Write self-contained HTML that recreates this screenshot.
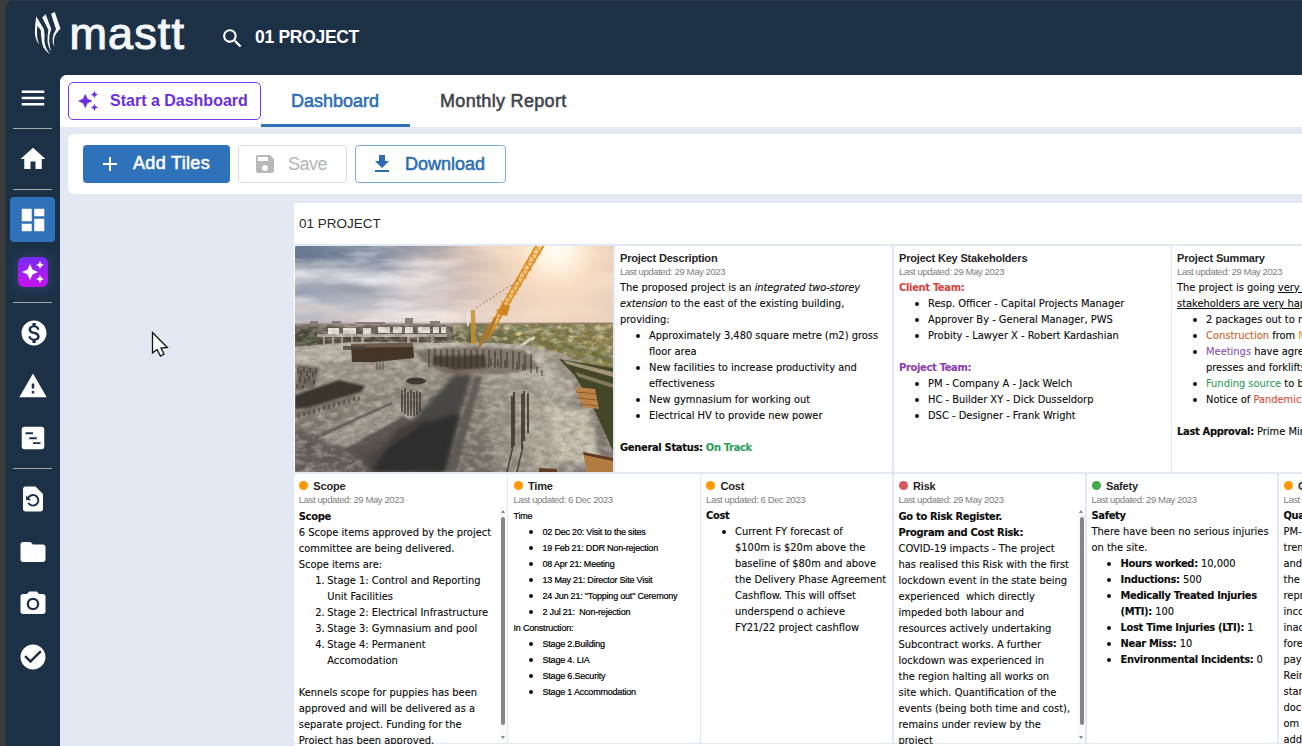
<!DOCTYPE html>
<html lang="en">
<head>
<meta charset="utf-8">
<title>01 PROJECT - Dashboard</title>
<style>
*{box-sizing:border-box;margin:0;padding:0}
html,body{width:1302px;height:746px;overflow:hidden;background:#3b3b3b;font-family:"Liberation Sans",sans-serif}
#app{position:absolute;left:5px;top:0;width:1297px;height:746px;background:#1d3146;border-top-left-radius:9px;overflow:hidden}
#topline{position:absolute;left:0;top:0;width:1297px;height:1px;background:#2a3947}
/* header */
#logo{position:absolute;left:27px;top:10px}
#brand{position:absolute;left:64.500px;top:4px;font-size:45px;color:#f4f7fb;line-height:60px;-webkit-text-stroke:1.100px #f4f7fb;letter-spacing:1.100px}
#search{position:absolute;left:215px;top:25.500px;width:25px;height:25px}
#projname{position:absolute;left:250px;top:26px;font-size:17.500px;font-weight:bold;color:#fff;line-height:22px;letter-spacing:-0.300px}
/* sidebar */
.sep{position:absolute;left:8px;width:39px;height:1px;background:#a3a7aa}
.ico{position:absolute;left:13px;width:30px;height:30px}
#activebox{position:absolute;left:5px;top:197px;width:45px;height:45px;border-radius:4px;background:#2f72b9}
#aibox{position:absolute;left:13px;top:257px;width:30px;height:30px;border-radius:6px;background:linear-gradient(180deg,#7a2af6 5%,#c414ee 95%);box-shadow:0 1px 9px 3px rgba(95,105,200,.22)}
/* content */
#content{position:absolute;left:55px;top:75px;width:1242px;height:671px;background:#e2e9f3;border-top-left-radius:7px;overflow:hidden}
#tabbar{position:absolute;left:0;top:0;width:1242px;height:52px;background:#fff}
#startbtn{position:absolute;left:8px;top:7px;width:193px;height:38px;border:1px solid #7c3aed;border-radius:5px;color:#6d28d9}
#startbtn span{position:absolute;left:41px;top:8px;font-size:16px;font-weight:bold;line-height:20px;white-space:nowrap;color:#6a2ee0}
.tab{position:absolute;top:14px;font-size:18px;line-height:24px;white-space:nowrap;-webkit-text-stroke:0.55px currentColor}
#tab1{left:231px;color:#2d6db3}
#tab2{left:380px;color:#3f4349;letter-spacing:0.32px}
#tabline{position:absolute;left:201px;top:49px;width:149px;height:3px;background:#2f72b9}
#toolbar{position:absolute;left:8px;top:59px;width:1240px;height:60px;background:#fff;border-radius:6px}
.btn{position:absolute;top:11px;height:38px;border-radius:4px;font-size:18px;line-height:22px;white-space:nowrap;-webkit-text-stroke:0.55px currentColor}
.btn span{position:absolute;top:7px}
#addbtn{left:15px;width:147px;background:#2f72b9;color:#fff;letter-spacing:0.33px}
#savebtn{left:170px;width:109px;border:1px solid #dcdcdc;color:#b5b5b5;-webkit-text-stroke:0;letter-spacing:-0.5px}
#dlbtn{left:287px;width:151px;border:1px solid #7fa9d6;color:#2d6db3}
/* dashboard */
#dtitle{position:absolute;left:234px;top:128px;width:1010px;height:41px;background:#fff;font-size:13.5px;line-height:41px;padding-left:5px;color:#2a2a2a;border-radius:2px}
.tile{position:absolute;overflow:hidden}
.bg{position:absolute;background:#fff;border-radius:2px}
.th{position:absolute;top:5px;font-size:11px;line-height:14px;font-weight:bold;color:#262626;white-space:nowrap;letter-spacing:-0.18px}
.tu{position:absolute;left:5px;top:20px;font-size:9.5px;line-height:12px;color:#7e7e7e;white-space:nowrap;letter-spacing:-0.4px}
.tb{position:absolute;left:5px;top:34px;font-family:"DejaVu Sans Condensed","Liberation Sans",sans-serif;font-size:11px;line-height:16px;color:#0c0c0c;white-space:nowrap;letter-spacing:0;-webkit-text-stroke:0.12px currentColor}
.tb.hb{top:35px}
.tb.up{top:34px}
.r2 .tb,.r2 .tu{left:4.5px}
.tb b{letter-spacing:-0.3px}
.tb em{letter-spacing:-0.1px}
.tb.ar{font-family:"Liberation Sans",sans-serif;font-size:9px;letter-spacing:-0.2px;color:#000;-webkit-text-stroke:0.2px #000}
.li{position:relative;padding-left:29px}
.li:before{content:"";position:absolute;left:15.5px;top:6px;width:4px;height:4px;border-radius:50%;background:#111}
.oli{position:relative;padding-left:28.5px}
.oli .n{position:absolute;left:16.5px}
.dot{position:absolute;left:4.5px;top:7px;width:9px;height:9px;border-radius:50%}
.sbk{position:absolute;top:33px;width:7px;height:235px;background:#fafafa}
.sbt{position:absolute;top:43px;width:4px;height:208px;background:#868686;border-radius:2px}
.sbu{position:absolute;top:36px;width:0;height:0;border-left:2.5px solid transparent;border-right:2.5px solid transparent;border-bottom:3.500px solid #858585}
.sbd{position:absolute;top:262px;width:0;height:0;border-left:2.5px solid transparent;border-right:2.5px solid transparent;border-top:3.500px solid #858585}
</style>
</head>
<body>
<div id="app">
<div id="topline"></div><div style="position:absolute;left:0;top:7px;width:1px;height:740px;background:rgba(59,59,59,.5)"></div>
<svg id="logo" width="40" height="50" viewBox="30 10 40 50" style="position:absolute;left:25px;top:10px">
 <g fill="#f7f9fc">
  <path d="M36.3 16.6 L43.9 29 Q45 35 44.4 41 Q45.5 49 50 54.2 Q43.5 50 42.2 43.5 Q40.8 36 40.8 30.2 L37.4 25.8 Q36.6 32 37.3 37.5 Q37.8 41.5 39.3 44.8 Q35.2 40 34.9 33 Q34.8 24 36.3 16.6Z"/>
  <path d="M45.6 14.2 L51.3 29 Q48.6 35 49.2 41 Q49.6 47 51.2 51.4 Q47.6 46.5 47.5 40.5 Q47.4 35 48.4 30 L42.2 17.4Z"/>
  <path d="M54.8 12.1 L60.5 28.8 Q54.6 34 54 39.5 Q53.6 43.5 54.4 47 Q52.2 43.5 52.6 39 Q53 33.5 56 29.2 L51 13.8Z"/>
 </g>
</svg>
<div id="brand">mastt</div>
<svg id="search" width="24" height="24" viewBox="0 0 24 24"><path fill="#fff" d="M15.5 14h-.79l-.28-.27C15.41 12.59 16 11.11 16 9.5 16 5.91 13.09 3 9.5 3S3 5.91 3 9.5 5.91 16 9.5 16c1.61 0 3.09-.59 4.23-1.57l.27.28v.79l5 4.99L20.49 19l-4.99-5zm-6 0C7.01 14 5 11.99 5 9.5S7.01 5 9.5 5 14 7.01 14 9.5 11.99 14 9.5 14z"/></svg>
<div id="projname">01 PROJECT</div>
<!-- sidebar -->
<svg class="ico" style="top:83px" viewBox="0 0 24 24"><path fill="#fff" d="M3 18h18v-2H3v2zm0-5h18v-2H3v2zm0-7v2h18V6H3z"/></svg>
<div class="sep" style="top:128px"></div>
<svg class="ico" style="top:144px" viewBox="0 0 24 24"><path fill="#fff" d="M10 20v-6h4v6h5v-8h3L12 3 2 12h3v8z"/></svg>
<div class="sep" style="top:189px"></div>
<div id="activebox"></div>
<svg class="ico" style="top:205px" viewBox="0 0 24 24"><path fill="#fff" d="M3 13h8V3H3v10zm0 8h8v-6H3v6zm10 0h8V11h-8v10zm0-18v6h8V3h-8z"/></svg>
<div id="aibox"></div>
<svg class="ico" style="top:260px;left:16px;width:24px;height:24px" viewBox="0 0 24 24"><path fill="#fff" d="M19 9l1.25-2.75L23 5l-2.75-1.25L19 1l-1.25 2.75L15 5l2.750 1.250L19 9zm-7.5.5L9 4 6.500 9.500 1 12l5.500 2.500L9 20l2.500-5.500L17 12l-5.500-2.500zM19 15l-1.250 2.750L15 19l2.750 1.250L19 23l1.250-2.750L23 19l-2.750-1.250L19 15z"/></svg>
<div class="sep" style="top:302px"></div>
<svg class="ico" style="top:318px;left:14px" viewBox="0 0 24 24"><path fill="#fff" d="M12 2C6.480 2 2 6.480 2 12s4.480 10 10 10 10-4.480 10-10S17.520 2 12 2zm1.410 16.090V20h-2.670v-1.930c-1.710-.360-3.160-1.460-3.270-3.400h1.960c.1 1.050.820 1.870 2.650 1.870 1.960 0 2.400-.980 2.400-1.590 0-.830-.440-1.610-2.670-2.140-2.480-.6-4.180-1.620-4.180-3.670 0-1.720 1.390-2.840 3.110-3.210V4h2.670v1.950c1.860.450 2.790 1.860 2.850 3.390H14.300c-.050-1.110-.640-1.870-2.220-1.870-1.500 0-2.400.680-2.400 1.640 0 .840.650 1.390 2.670 1.910s4.180 1.390 4.180 3.910c-.010 1.830-1.380 2.830-3.120 3.160z"/></svg>
<svg class="ico" style="top:371px" viewBox="0 0 24 24"><path fill="#fff" d="M1 21h22L12 2 1 21zm12-3h-2v-2h2v2zm0-4h-2v-4h2v4z"/></svg>
<svg class="ico" style="top:423px" viewBox="0 0 24 24"><path fill="#fff" fill-rule="evenodd" d="M19 3H5c-1.100 0-2 .9-2 2v14c0 1.100.9 2 2 2h14c1.100 0 2-.9 2-2V5c0-1.100-.9-2-2-2zM6 7.400h6v1.500H6zM9 11.400h6v1.500H9zM12 15.300h6v1.500h-6z"/></svg>
<div class="sep" style="top:468px"></div>
<svg class="ico" style="top:484px" viewBox="0 0 24 24"><path fill="#fff" d="M14 2H6c-1.100 0-1.990.9-1.990 2L4 20c0 1.100.890 2 1.990 2H18c1.100 0 2-.9 2-2V8l-6-6zm-2 16c-2.050 0-3.810-1.240-4.580-3h1.710c.630.9 1.680 1.500 2.870 1.500 1.930 0 3.500-1.570 3.500-3.500S13.930 9.500 12 9.500c-1.350 0-2.520.780-3.100 1.900l1.600 1.600h-4V9l1.300 1.300C8.690 8.920 10.230 8 12 8c2.760 0 5 2.240 5 5s-2.240 5-5 5z"/></svg>
<svg class="ico" style="top:537px" viewBox="0 0 24 24"><path fill="#fff" d="M10 4H4c-1.100 0-1.990.9-1.990 2L2 18c0 1.100.9 2 2 2h16c1.100 0 2-.9 2-2V8c0-1.100-.9-2-2-2h-8l-2-2z"/></svg>
<svg class="ico" style="top:589px" viewBox="0 0 24 24"><circle cx="12" cy="12" r="3.2" fill="#fff"/><path fill="#fff" d="M9 2L7.170 4H4c-1.100 0-2 .9-2 2v12c0 1.100.9 2 2 2h16c1.100 0 2-.9 2-2V6c0-1.100-.9-2-2-2h-3.170L15 2H9zm3 15c-2.760 0-5-2.240-5-5s2.240-5 5-5 5 2.240 5 5-2.240 5-5 5z"/></svg>
<svg class="ico" style="top:642px" viewBox="0 0 24 24"><path fill="#fff" d="M12 2C6.480 2 2 6.480 2 12s4.480 10 10 10 10-4.480 10-10S17.520 2 12 2zm-2 15l-5-5 1.410-1.410L10 14.170l7.590-7.590L19 8l-9 9z"/></svg>

<div id="content">
 <div id="tabbar">
  <div id="startbtn"><svg style="position:absolute;left:8px;top:7px" width="22" height="22" viewBox="0 0 24 24"><path fill="#6a2ee0" d="M19 9l1.250-2.750L23 5l-2.750-1.250L19 1l-1.250 2.750L15 5l2.750 1.250L19 9zm-7.500.5L9 4 6.500 9.500 1 12l5.500 2.500L9 20l2.500-5.500L17 12l-5.500-2.500zM19 15l-1.250 2.750L15 19l2.750 1.250L19 23l1.250-2.750L23 19l-2.750-1.250L19 15z"/></svg><span>Start a Dashboard</span></div>
  <div class="tab" id="tab1">Dashboard</div>
  <div class="tab" id="tab2">Monthly Report</div>
  <div id="tabline"></div>
 </div>
 <div id="toolbar">
  <div class="btn" id="addbtn"><svg style="position:absolute;left:15px;top:7px" width="24" height="24" viewBox="0 0 24 24"><path fill="#fff" d="M19 13h-6v6h-2v-6H5v-2h6V5h2v6h6v2z"/></svg><span style="left:50px">Add Tiles</span></div>
  <div class="btn" id="savebtn"><svg style="position:absolute;left:14px;top:6px" width="24" height="24" viewBox="0 0 24 24"><path fill="#b8b8b8" d="M17 3H5c-1.110 0-2 .9-2 2v14c0 1.100.890 2 2 2h14c1.100 0 2-.9 2-2V7l-4-4zm-5 16c-1.660 0-3-1.340-3-3s1.340-3 3-3 3 1.340 3 3-1.340 3-3 3zm3-10H5V5h10v4z"/></svg><span style="left:49px">Save</span></div>
  <div class="btn" id="dlbtn"><svg style="position:absolute;left:14px;top:6px" width="24" height="24" viewBox="0 0 24 24"><path fill="#2d6db3" d="M19 9h-4V3H9v6H5l7 7 7-7zM5 18v2h14v-2H5z"/></svg><span style="left:49px">Download</span></div>
 </div>
 <div id="dtitle">01 PROJECT</div>
<div class="bg" style="left:234.40px;top:170.80px;width:319.10px;height:226.00px"></div><div class="bg" style="left:555.20px;top:170.80px;width:277.10px;height:226.00px"></div><div class="bg" style="left:833.90px;top:170.80px;width:276.70px;height:226.00px"></div><div class="bg" style="left:1112.20px;top:170.80px;width:137.80px;height:226.00px"></div><div class="bg" style="left:234.40px;top:398.60px;width:212.60px;height:269.40px"></div><div class="bg" style="left:448.40px;top:398.60px;width:191.40px;height:269.40px"></div><div class="bg" style="left:641.40px;top:398.60px;width:190.90px;height:269.40px"></div><div class="bg" style="left:833.90px;top:398.60px;width:191.30px;height:269.40px"></div><div class="bg" style="left:1026.80px;top:398.60px;width:190.40px;height:269.40px"></div><div class="bg" style="left:1218.80px;top:398.60px;width:31.20px;height:269.40px"></div><div class="bg" style="left:234.40px;top:669.20px;width:1020px;height:10px"></div>
<div class="tile" id="imgtile" style="left:235px;top:171px;width:318px;height:226px"><svg width="318" height="226" viewBox="0 0 318 226" style="position:absolute;left:0;top:0;display:block">
<defs>
<linearGradient id="sky" x1="0" y1="0" x2="0" y2="1"><stop offset="0" stop-color="#8c93a4"/><stop offset=".45" stop-color="#c6c3c8"/><stop offset="1" stop-color="#e9dcd2"/></linearGradient>
<linearGradient id="skyl" x1="0" y1="0" x2="1" y2="0.35"><stop offset="0" stop-color="#62758e" stop-opacity=".85"/><stop offset=".5" stop-color="#8e94a8" stop-opacity=".35"/><stop offset="1" stop-color="#b0a0a0" stop-opacity="0"/></linearGradient>
<radialGradient id="sun" cx="262" cy="2" r="175" gradientUnits="userSpaceOnUse"><stop offset="0" stop-color="#fffefa"/><stop offset=".08" stop-color="#fff6e6"/><stop offset=".22" stop-color="#fbdfc2" stop-opacity=".95"/><stop offset=".5" stop-color="#f2d0b6" stop-opacity=".6"/><stop offset="1" stop-color="#e2c2b4" stop-opacity="0"/></radialGradient>
<linearGradient id="trees" x1="0" y1="0" x2="1" y2="0"><stop offset="0" stop-color="#55553a"/><stop offset=".45" stop-color="#76703c"/><stop offset="1" stop-color="#8a7b42"/></linearGradient>
<linearGradient id="ground" x1="0" y1="0" x2="0" y2="1"><stop offset="0" stop-color="#ada496"/><stop offset=".3" stop-color="#8e867a"/><stop offset="1" stop-color="#6d675f"/></linearGradient>
<linearGradient id="gr" x1="0" y1="0" x2="1" y2="0"><stop offset="0" stop-color="#b9b1a4" stop-opacity="0"/><stop offset=".6" stop-color="#c4bbad" stop-opacity=".8"/><stop offset="1" stop-color="#cfc5b6" stop-opacity=".9"/></linearGradient>
<filter id="b1" x="-10%" y="-10%" width="120%" height="120%"><feGaussianBlur stdDeviation="1"/></filter>
<filter id="b2" x="-20%" y="-20%" width="140%" height="140%"><feGaussianBlur stdDeviation="2.5"/></filter>
<filter id="b4" x="-30%" y="-30%" width="160%" height="160%"><feGaussianBlur stdDeviation="5"/></filter>
<clipPath id="clipimg"><rect width="318" height="226" rx="2"/></clipPath>
<filter id="nz" x="0" y="0" width="100%" height="100%"><feTurbulence type="fractalNoise" baseFrequency="0.12 0.2" numOctaves="4" seed="7" result="t"/><feColorMatrix in="t" type="matrix" values="0 0 0 0 0.16  0 0 0 0 0.14  0 0 0 0 0.12  0 0 0 0.9 -0.33"/></filter>
<filter id="nz2" x="0" y="0" width="100%" height="100%"><feTurbulence type="fractalNoise" baseFrequency="0.1 0.18" numOctaves="4" seed="11" result="t"/><feColorMatrix in="t" type="matrix" values="0 0 0 0 0.92  0 0 0 0 0.88  0 0 0 0 0.8  0 0 0 0.8 -0.32"/></filter>
<filter id="cl" x="0" y="0" width="100%" height="100%"><feTurbulence type="fractalNoise" baseFrequency="0.012 0.05" numOctaves="4" seed="5" result="t"/><feColorMatrix in="t" type="matrix" values="0 0 0 0 0.95  0 0 0 0 0.93  0 0 0 0 0.93  0 0 0 2.4 -1.0"/></filter>
<filter id="cd" x="0" y="0" width="100%" height="100%"><feTurbulence type="fractalNoise" baseFrequency="0.015 0.06" numOctaves="3" seed="21" result="t"/><feColorMatrix in="t" type="matrix" values="0 0 0 0 0.36  0 0 0 0 0.42  0 0 0 0 0.52  0 0 0 2.2 -1.0"/></filter>
<filter id="tz" x="0" y="0" width="100%" height="100%"><feTurbulence type="fractalNoise" baseFrequency="0.09 0.16" numOctaves="3" seed="3" result="t"/><feColorMatrix in="t" type="matrix" values="0 0 0 0 0.17  0 0 0 0 0.2  0 0 0 0 0.08  0 0 0 3.2 -1.45"/></filter>
<filter id="ty" x="0" y="0" width="100%" height="100%"><feTurbulence type="fractalNoise" baseFrequency="0.11 0.2" numOctaves="3" seed="9" result="t"/><feColorMatrix in="t" type="matrix" values="0 0 0 0 0.75  0 0 0 0 0.66  0 0 0 0 0.3  0 0 0 3.0 -1.55"/></filter>
<clipPath id="ctree"><path d="M158 79 L318 78 L318 128 L290 118 L262 106 L236 100 L200 97 L158 98Z"/></clipPath>
</defs>
<g clip-path="url(#clipimg)">
<rect width="318" height="226" fill="#9a958c"/>
<!-- sky -->
<rect width="318" height="82" fill="url(#sky)"/>
<rect width="318" height="82" fill="url(#skyl)"/>
<g filter="url(#b4)" opacity=".75">
 <path d="M-10 22 Q60 18 120 40 T250 62 L250 70 Q150 52 100 44 T-10 36Z" fill="#e4e0e2"/>
 <path d="M-10 8 Q40 4 90 22 L70 24 Q30 14 -10 18Z" fill="#5d6f88"/>
 <path d="M30 34 Q70 34 100 48 L60 44Z" fill="#7f8798"/>
 <path d="M-10 56 Q80 50 170 66 L170 76 L-10 74Z" fill="#ddd5d2"/>
</g>
<rect width="230" height="80" filter="url(#cd)" opacity=".7"/>
<rect width="318" height="80" filter="url(#cl)" opacity=".8"/>
<rect width="318" height="120" fill="url(#sun)"/>
<!-- horizon: city left -->
<rect x="0" y="78" width="170" height="26" fill="#5e534a"/>
<rect x="0" y="77" width="318" height="3" fill="#9a8d84" opacity=".8" filter="url(#b1)"/>
<g fill="#8a7e76"><rect x="15" y="75" width="8" height="5"/><rect x="37" y="75" width="9" height="5"/><rect x="110" y="72" width="8" height="8"/><rect x="135" y="75" width="10" height="4"/><rect x="60" y="76" width="30" height="3"/></g>
<rect x="0" y="84" width="22" height="20" fill="#3f4530" filter="url(#b1)"/>
<g fill="#e9e4dc"><rect x="33" y="82" width="11" height="6"/><rect x="48" y="82" width="13" height="6"/><rect x="68" y="82" width="8" height="6"/><rect x="83" y="81" width="12" height="6"/><rect x="98" y="81" width="9" height="6"/><rect x="110" y="81" width="8" height="6"/><rect x="123" y="81" width="12" height="6"/><rect x="138" y="81" width="6" height="6"/><rect x="146" y="81" width="5" height="6"/></g>
<rect x="22" y="88" width="130" height="3" fill="#b5aa9e"/>
<rect x="22" y="91" width="130" height="8" fill="#4c4138"/>
<g fill="#a09488"><rect x="28" y="91" width="2" height="8"/><rect x="37" y="91" width="2" height="8"/><rect x="46" y="91" width="2" height="8"/><rect x="56" y="91" width="2" height="8"/><rect x="66" y="91" width="3" height="6"/><rect x="112" y="91" width="3" height="6"/><rect x="122" y="91" width="2" height="6"/><rect x="136" y="90" width="3" height="7"/></g>
<!-- trees right -->
<path d="M158 78 L318 77 L318 128 L290 118 L262 106 L236 100 L200 97 L158 98Z" fill="url(#trees)"/>
<path d="M158 78 L318 77 L318 84 L158 84Z" fill="#8d7f5c" opacity=".8" filter="url(#b1)"/>
<g clip-path="url(#ctree)"><rect x="158" y="78" width="160" height="52" filter="url(#tz)"/><rect x="158" y="78" width="160" height="52" filter="url(#ty)"/></g>
<path d="M240 90 Q232 93 226 98 Q222 101 214 102 L224 102 Q232 98 240 92Z" fill="#e3d8c6"/>
<path d="M255 96 Q285 100 318 112 L318 118 Q285 104 255 100Z" fill="#5f6630" opacity=".8"/>
<!-- ground -->
<path d="M0 101 L60 96 L160 97 L200 97 L236 100 L262 106 L290 118 L318 128 L318 226 L0 226Z" fill="url(#ground)"/>
<path d="M186 133 L262 118 L303 226 L200 226Z" fill="#a09a8e" opacity=".7" filter="url(#b2)"/>
<path d="M0 101 L58 97 L62 112 L0 120Z" fill="#b9b3a8" filter="url(#b1)"/>
<path d="M60 97 L200 98 L232 101 L236 108 L120 108 L62 110Z" fill="#beb7ab" filter="url(#b1)"/>
<path d="M145 108 L250 108 L266 136 L172 128Z" fill="#c9c1b4" opacity=".7" filter="url(#b2)"/>
<path d="M252 158 L296 164 L306 218 L258 214Z" fill="#cbc1b1" opacity=".9" filter="url(#b2)"/>
<path d="M222 150 L252 152 L262 226 L236 226Z" fill="#bdb3a3" opacity=".6" filter="url(#b2)"/>
<path d="M236 128 L276 134 L282 156 L246 150Z" fill="#b9b1a4" opacity=".8" filter="url(#b2)"/>
<path d="M0 120 L62 112 L140 118 L150 132 L70 150 L0 166Z" fill="#9c968b" opacity=".7" filter="url(#b2)"/>
<path d="M22 190 L98 152 L120 160 L128 176 L60 208Z" fill="#a59f94" opacity=".7" filter="url(#b2)"/>
<path d="M0 182 L46 200 L76 226 L0 226Z" fill="#5c5852" opacity=".95" filter="url(#b2)"/>
<rect x="0" y="78" width="318" height="148" filter="url(#nz)"/>
<rect x="0" y="78" width="318" height="148" filter="url(#nz2)"/>
<!-- dark structures -->
<path d="M56 98 L118 97 L119 112 L80 116 L57 116Z" fill="#43342a"/>
<path d="M56 98 L118 97 L118 101 L56 102Z" fill="#6e5a48"/>
<path d="M118 104 L180 100 L230 104 L245 122 L210 128 L150 128 L130 116Z" fill="#6a5e54" opacity=".7" filter="url(#b1)"/>
<path d="M138 110 L190 109 L192 122 L160 124 L138 118Z" fill="#3e342c" opacity=".75" filter="url(#b1)"/>
<g stroke="#3a2f28" stroke-width="1"><path d="M134 103v18M140 102v18M146 104v17M152 103v18M158 103v18M164 104v18M170 103v19M176 104v18M182 103v18M188 104v17M194 104v18M200 105v17M206 104v18M212 106v16M218 105v18M224 106v17M230 108v16M236 108v14"/></g>
<!-- shadow -->
<path d="M160 128 L178 128 L166 166 L150 226 L74 226 L68 216 L112 180Z" fill="#484644" filter="url(#b2)"/>
<path d="M104 182 L164 168 L150 226 L76 226Z" fill="#2e2d2d" filter="url(#b2)"/>
<path d="M180 130 L187 131 L161 226 L151 226Z" fill="#5a5651" opacity=".85" filter="url(#b1)"/>
<path d="M48 204 L108 170 L126 180 L70 218Z" fill="#46423e" opacity=".75" filter="url(#b1)"/>
<path d="M20 190 L96 156 L98 158 L22 193Z" fill="#5a554e" opacity=".7"/>
<!-- left dark box -->
<path d="M0 149 L44 134 L70 140 L66 146 L14 162 L0 163Z" fill="#3a352f" filter="url(#b1)"/>
<path d="M2 119 L24 121 L20 142 L2 144Z" fill="#5f574e" opacity=".7" filter="url(#b1)"/>
<path d="M0 165 L60 148 L62 152 L0 172Z" fill="#6b645b" opacity=".7" filter="url(#b1)"/>
<ellipse cx="121" cy="135" rx="10" ry="3.5" fill="#3e3832"/>
<rect x="48" y="100" width="22" height="4" fill="#4a4038" opacity=".8"/>
<!-- rebars -->
<g stroke="#2c2622" stroke-width="1.2"><path d="M107 144v22M110 142v26M113 146v24M116 144v26M119 146v24M122 145v24M125 146v20"/></g>
<g stroke="#3a2e26" stroke-width="1.6"><path d="M217 150v52M219 146v54M227 148v55M229 145v50M233 147v40"/></g>
<path d="M218 200 L212 226 M228 200 L222 226" stroke="#4a4038" stroke-width="1.5"/>
<g stroke="#4a3a30" stroke-width=".8"><path d="M82 112v12M85 110v14M88 112v12"/></g>
<g stroke="#2e2823" stroke-width="1" opacity=".85"><path d="M3 122v5M6 124v5M9 121v5M12 125v5M15 122v5M18 126v5M21 123v5M5 131v5M10 132v5M14 130v5M19 133v5M2 138v4M8 139v4"/><path d="M4 168v4M9 166v4M14 165v4M19 163v4M24 162v4M29 160v4M34 159v4M39 157v4M44 156v4M49 154v4M54 153v4M59 151v4M64 150v4"/><path d="M196 112v8M203 113v8M210 114v8M222 116v8M228 118v7M236 120v7M242 121v6M247 124v6"/></g>
<!-- right side vegetation and wood -->
<path d="M264 113 L318 122 L318 205 L305 176 L292 150 L280 130Z" fill="#434628"/>
<path d="M268 114 L318 126 L318 131 L272 118Z" fill="#b9a988" opacity=".8"/>
<path d="M280 126 L318 138 L318 142 L284 131Z" fill="#a09070" opacity=".7"/>
<path d="M280 141 L300 143 L304 163 L288 161Z" fill="#bb8347"/>
<path d="M281 146 L301 148 M283 152 L302 154 M285 158 L303 160" stroke="#8a5a2c" stroke-width="1"/>
<path d="M288 206 L318 212 L318 226 L292 226Z" fill="#b07c40"/>
<path d="M288 206 L318 212 L318 215 L289 209Z" fill="#5a3a20"/>
<path d="M244 222 L262 223 L262 226 L244 226Z" fill="#5e3c22"/>
<!-- crane -->
<path d="M240 0 L249.500 0 L194 92 L188 91Z" fill="#eeb04a" opacity=".55"/>
<path d="M240 0 L242 0 L189.500 91 L188 91Z" fill="#dc8c22"/>
<path d="M247.500 0 L249.500 0 L194 92 L192.500 91.500Z" fill="#dc8c22"/>
<path d="M241 0 L245 8 L236 8 L240 16 L231 16 L236 24 L227 24 L231 32 L222 32 L226 40 L217 40 L221 48 L212 48 L216 56 L207 56 L211 64 L202 64 L206 72 L198 72 L201 80 L193 80 L196 88" fill="none" stroke="#dc8c22" stroke-width="1.1"/>
<path d="M207 58 L215 60 L212 70 L203 68Z" fill="#d08422"/>
<path d="M203 68 L194 92 L182 104 L186 90Z" fill="#a5762c" opacity=".9"/>
<path d="M176 64 L180 64 L181 98 L176 98Z" fill="#c8902c" opacity=".85"/>
<path d="M172 66 L174 66 L174 80 L172 80Z" fill="#efe6da" opacity=".9"/>
<path d="M181 62 L224 34" stroke="#7a5a40" stroke-width=".7" stroke-dasharray="2 2"/>
</g>
</svg>
</div>
<div class="tile" style="left:555px;top:171px;width:277px;height:226px"><div class="th" style="left:5px">Project Description</div><div class="tu">Last updated: 29 May 2023</div><div class="tb">The proposed project is an <em>integrated two-storey</em><br><em>extension</em> to the east of the existing building,<br>providing:<div class="li">Approximately 3,480 square metre (m2) gross<br>floor area</div><div class="li">New facilities to increase productivity and<br>effectiveness</div><div class="li">New gymnasium for working out</div><div class="li">Electrical HV to provide new power</div><br><b>General Status:</b> <b style="color:#2e9e5b">On Track</b></div></div>
<div class="tile" style="left:834px;top:171px;width:276px;height:226px"><div class="th" style="left:5px">Project Key Stakeholders</div><div class="tu">Last updated: 29 May 2023</div><div class="tb"><b style="color:#cf4a43">Client Team:</b><div class="li">Resp. Officer - Capital Projects Manager</div><div class="li">Approver By - General Manager, PWS</div><div class="li">Probity - Lawyer X - Robert Kardashian</div><br><b style="color:#8a3fae">Project Team:</b><div class="li">PM - Company A - Jack Welch</div><div class="li">HC - Builder XY - Dick Dusseldorp</div><div class="li">DSC - Designer - Frank Wright</div></div></div>
<div class="tile" style="left:1112px;top:171px;width:130px;height:226px"><div class="th" style="left:5px">Project Summary</div><div class="tu">Last updated: 29 May 2023</div><div class="tb">The project is going <u>very well and all the</u><br><u>stakeholders are very happy with progress.</u><div class="li">2 packages out to market this month</div><div class="li"><span style="color:#c9622a">Construction</span> from <span style="color:#e09a2a">May 2023</span> onwards</div><div class="li"><span style="color:#8557b3">Meetings</span> have agreed on the use of<br>presses and forklifts on the site</div><div class="li"><span style="color:#35a05c">Funding source</span> to be confirmed</div><div class="li">Notice of <span style="color:#d4503f">Pandemic</span> delay issued</div><br><b>Last Approval:</b> Prime Minister</div></div>
<div class="tile r2" style="left:234.3px;top:399px;width:212.7px;height:270px"><i class="dot" style="background:#ff9800"></i><div class="th" style="left:19px">Scope</div><div class="tu">Last updated: 29 May 2023</div><div class="tb hb"><b class="h">Scope</b><br>6 Scope items approved by the project<br>committee are being delivered.<br>Scope items are:<div class="oli"><span class="n">1.</span>Stage 1: Control and Reporting<br>Unit Facilities</div><div class="oli"><span class="n">2.</span>Stage 2: Electrical Infrastructure</div><div class="oli"><span class="n">3.</span>Stage 3: Gymnasium and pool</div><div class="oli"><span class="n">4.</span>Stage 4: Permanent<br>Accomodation</div><br>Kennels scope for puppies has been<br>approved and will be delivered as a<br>separate project. Funding for the<br>Project has been approved.</div><div class="sbk" style="left:205.7px"></div><div class="sbt" style="left:207.2px"></div><div class="sbu" style="left:206.7px"></div><div class="sbd" style="left:206.7px"></div></div>
<div class="tile r2" style="left:449px;top:399px;width:190.75px;height:270px"><i class="dot" style="background:#ff9800"></i><div class="th" style="left:19px">Time</div><div class="tu">Last updated: 6 Dec 2023</div><div class="tb ar">Time<div class="li a">02 Dec 20: Visit to the sites</div><div class="li a">19 Feb 21: DDR Non-rejection</div><div class="li a">08 Apr 21: Meeting</div><div class="li a">13 May 21: Director Site Visit</div><div class="li a">24 Jun 21: "Topping out" Ceremony</div><div class="li a">2 Jul 21:&nbsp; Non-rejection</div>In Construction:<div class="li a">Stage 2.Building</div><div class="li a">Stage 4. LIA</div><div class="li a">Stage 6.Security</div><div class="li a">Stage 1 Accommodation</div></div></div>
<div class="tile r2" style="left:641.5px;top:399px;width:190.5px;height:270px"><i class="dot" style="background:#ff9800"></i><div class="th" style="left:19px">Cost</div><div class="tu">Last updated: 6 Dec 2023</div><div class="tb up"><b class="h">Cost</b><div class="li">Current FY forecast of<br>$100m is $20m above the<br>baseline of $80m and above<br>the Delivery Phase Agreement<br>Cashflow. This will offset<br>underspend o achieve<br>FY21/22 project cashflow</div></div></div>
<div class="tile r2" style="left:834px;top:399px;width:191px;height:270px"><i class="dot" style="background:#d9575a"></i><div class="th" style="left:19px">Risk</div><div class="tu">Last updated: 29 May 2023</div><div class="tb hb"><b>Go to Risk Register.</b><br><b>Program and Cost Risk:</b><br>COVID-19 impacts - The project<br>has realised this Risk with the first<br>lockdown event in the state being<br>experienced&nbsp; which directly<br>impeded both labour and<br>resources actively undertaking<br>Subcontract works. A further<br>lockdown was experienced in<br>the region halting all works on<br>site which. Quantification of the<br>events (being both time and cost),<br>remains under review by the<br>project</div><div class="sbk" style="left:184px"></div><div class="sbt" style="left:185.5px"></div><div class="sbu" style="left:185px"></div><div class="sbd" style="left:185px"></div></div>
<div class="tile r2" style="left:1027px;top:399px;width:190px;height:270px"><i class="dot" style="background:#43a84b"></i><div class="th" style="left:19px">Safety</div><div class="tu">Last updated: 29 May 2023</div><div class="tb up"><b class="h">Safety</b><br>There have been no serious injuries<br>on the site.<div class="li"><b>Hours worked:</b> 10,000</div><div class="li"><b>Inductions:</b> 500</div><div class="li"><b>Medically Treated Injuries</b><br><b>(MTI):</b> 100</div><div class="li"><b>Lost Time Injuries (LTI):</b> 1</div><div class="li"><b>Near Miss:</b> 10</div><div class="li"><b>Environmental Incidents:</b> 0</div></div></div>
<div class="tile r2" style="left:1219px;top:399px;width:23px;height:270px"><i class="dot" style="background:#ff9800"></i><div class="th" style="left:19px">Quality</div><div class="tu">Last updated: 29 May 2023</div><div class="tb up"><b class="h">Quality</b><br>PM-led audits show a<br>trend of defects<br>and is working with<br>the contractor to<br>represent and fix<br>incorrect or<br>inadequate work.<br>foreman to withhold<br>payment until<br>Reinspection<br>standards are<br>documented<br>om mission items<br>additional works</div></div>

<svg style="position:absolute;left:91px;top:256px" width="20" height="28" viewBox="-1.500 -1.500 20 28"><path d="M0 0L0 20.500L4.500 17L8 23.500L11.500 21.500L8.500 15.500L14.800 15Z" fill="#fff" stroke="#111" stroke-width="1.300" stroke-linejoin="miter"/></svg>
</div>
</div>
</body>
</html>
